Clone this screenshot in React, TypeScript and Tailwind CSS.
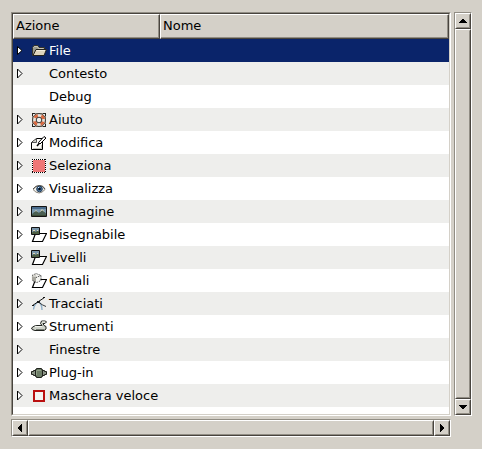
import type { ReactNode } from "react";

type Row = { label: string; icon?: ReactNode; expandable?: boolean };

function Icon({ children }: { children: ReactNode }) {
  return (
    <svg width="16" height="16" viewBox="0 0 16 16" aria-hidden="true" className="block">
      {children}
    </svg>
  );
}

const folder = (
  <Icon>
    <path d="M1.5 12.5V4.5l1.5-2h4l1 2h5.500V7" fill="#9b9a8e" stroke="#34332d" />
    <path d="M2.500 4.500 3.500 3.500h3l1 2H12.500" fill="none" stroke="#c9c6ba" />
    <path d="m2 12.500 3-6h10.500l-2.500 6Z" fill="#ddd4bd" stroke="#24231e" />
    <path d="M5.500 7.500h8.500" stroke="#f3eddd" />
  </Icon>
);

const lifebuoy = (
  <Icon>
    <path d="M3 1.500h10M14.500 3v10M13 14.500H3M1.500 13V3" stroke="#8a867c" />
    <path d="M1 1h3v1H2v2H1zM12 1h3v3h-1V2h-2zM14 12h1v3h-3v-1h2zM1 12h1v2h2v1H1z" fill="#24221f" />
    <circle cx="8" cy="8" r="6.500" fill="#e6e3db" stroke="#3a3732" />
    <circle cx="8" cy="8" r="4.700" fill="none" stroke="#d9683f" strokeWidth="3" strokeDasharray="3.700 3.682" strokeDashoffset="-1.850" />
    <circle cx="8" cy="8" r="2.800" fill="#efeeeb" stroke="#38342f" />
  </Icon>
);

const edit = (
  <Icon>
    <path d="M.5 7.500 5.500 3.500h6V14.500H.5Z" fill="#fbfbf8" stroke="#000" />
    <path d="M1 7.500h4.500V4" fill="#d0d0c8" stroke="#555" />
    <path d="M2 13.500h8.500V10" fill="none" stroke="#c4c4ba" />
    <path d="m7.500 7.500 5.500-6 2 1.500-6 6Z" fill="#fff" stroke="#000" />
    <path d="M6 11 8.500 8" stroke="#000" strokeWidth="1.500" />
  </Icon>
);

const selection = (
  <Icon>
    <path d="M1 1h14v14H1z" fill="#ef7777" />
    <path d="M1 1.5h14M1.5 1v14M1 14.5h14M14.5 1v14" stroke="#fff" />
    <path d="M1 1.5h14M1.5 1v14M1 14.5h14M14.5 1v14" stroke="#000" strokeDasharray="1 1" />
  </Icon>
);

const eye = (
  <Icon>
    <path d="M2 8.500Q5 4.500 8.500 4.500t5.500 4Q11 12 8 12T2 8.500Z" fill="#f5f3ec" stroke="#8b867d" />
    <path d="M2 8Q4.500 4.500 8.500 4.500T14 8" fill="none" stroke="#55514b" />
    <circle cx="8.500" cy="8" r="2.800" fill="#49739d" stroke="#203b59" />
    <circle cx="8.500" cy="8" r="1.300" fill="#050d17" />
    <path d="M7 6h1v1H7z" fill="#d9edff" />
  </Icon>
);

const picture = (
  <Icon>
    <path d="M.5 2.500h15v10H.5Z" fill="#7898b0" stroke="#141414" />
    <path d="M1 3h14v2H1Z" fill="#4a6c8c" />
    <path d="m1 10 4-3.500L8 9l3-3.500 4 4V12H1Z" fill="#4b6053" />
    <path d="m4 7.500 1-1 1 1M9.500 7.500 11 5.500l2 2" fill="none" stroke="#e8e2c6" />
    <path d="M1 11.500h14" stroke="#3c4c36" />
  </Icon>
);

const layers = (
  <Icon>
    <path d="M4.500 6.500h11L11.500 14.500H1.500Z" fill="#fff" stroke="#000" strokeWidth="1.200" />
    <path d="M.5.500h8v7h-8Z" fill="#7894a8" stroke="#111" />
    <path d="m1 5.500 2-1.500 2 1 1.500-2L8 4.500V7H1Z" fill="#4d5e43" />
    <path d="M2 3h2v1H2zM6 3h1v1H6z" fill="#e1d8b4" />
  </Icon>
);

const channels = (
  <Icon>
    <path d="M4.500 6.500h11L11.500 14.500H1.500Z" fill="#fff" stroke="#000" strokeWidth="1.200" />
    <path d="m.5 2.500 4-2 5 2v5l-4 2-5-2Z" fill="#f4f4f0" />
    <path d="m1 3 4 1v5L1 7Z" fill="#a7a69e" />
    <path d="m1 3 4-2v3Z" fill="#d0cfc8" />
    <path d="m1 2.500 4-2 5 2v5l-4 2M5 4.500l5-2" fill="none" stroke="#333" strokeDasharray="1 1" />
    <path d="M1.500 7.500 5.500 9.500" stroke="#555" />
  </Icon>
);

const path = (
  <Icon>
    <path d="M2.500 13.500Q3 8.500 7.500 5.500 11 8 11 14" fill="none" stroke="#8fb0ca" strokeWidth="1.400" />
    <path d="m1.500 9.500 12-8" stroke="#151515" />
    <path d="M1 9h2v1H1zM12 1h2v1h-2zM6 5h3v2H6z" fill="#151515" />
    <path d="M8 6.500Q11 9 15 10.500" fill="none" stroke="#35393c" />
  </Icon>
);

const tools = (
  <Icon>
    <path d="M.5 9Q3 6.500 6 6.500h5l-1.500-2 1-2.500h4l1 1-1.500 1.500h-2l1 2 2 1V10l-2 1.500H4Q.5 11 .5 9Z" fill="#cfd3ca" stroke="#222521" />
    <path d="M4 7.500h7M11 3h3" stroke="#f1f3ed" />
    <path d="M5 10.500h8" stroke="#7a7e76" />
  </Icon>
);

const plugin = (
  <Icon>
    <path d="M.5 6.500h2v-1h2v5h-2v-1h-2ZM11.500 5.500h2v1h2v3h-2v1h-2Z" fill="#8d9688" stroke="#20221d" />
    <path d="M4.500 4.500h1v-1h5v1h1v7h-1v1h-5v-1h-1Z" fill="#6c7d66" stroke="#20221d" />
    <path d="M5.500 10V5.500H10" fill="none" stroke="#91a087" />
  </Icon>
);

const quickMask = (
  <Icon>
    <path d="M3 3h10v10H3z" fill="#f4f4f2" stroke="#ba1010" strokeWidth="2" />
  </Icon>
);

const rows: Row[] = [
  { label: "File", icon: folder },
  { label: "Contesto" },
  { label: "Debug", expandable: false },
  { label: "Aiuto", icon: lifebuoy },
  { label: "Modifica", icon: edit },
  { label: "Seleziona", icon: selection },
  { label: "Visualizza", icon: eye },
  { label: "Immagine", icon: picture },
  { label: "Disegnabile", icon: layers },
  { label: "Livelli", icon: layers },
  { label: "Canali", icon: channels },
  { label: "Tracciati", icon: path },
  { label: "Strumenti", icon: tools },
  { label: "Finestre" },
  { label: "Plug-in", icon: plugin },
  { label: "Maschera veloce", icon: quickMask },
];

const raised =
  "border border-t-white border-l-white border-r-[#48443e] border-b-[#48443e] bg-[#d4d0c8]";

const bevel = "h-full w-full border border-t-[#d4d0c8] border-l-[#d4d0c8] border-r-[#918d84] border-b-[#918d84]";

function Arrow({ d }: { d: string }) {
  return (
    <svg width="8" height="8" viewBox="0 0 8 8" shapeRendering="crispEdges" aria-hidden="true">
      <path d={d} fill="#000" />
    </svg>
  );
}

function StepButton({ label, d }: { label: string; d: string }) {
  return (
    <button type="button" aria-label={label} className={`size-4 shrink-0 ${raised}`}>
      <span className={`flex items-center justify-center ${bevel}`}>
        <Arrow d={d} />
      </span>
    </button>
  );
}

function Scrollbar({ vertical = false }: { vertical?: boolean }) {
  return (
    <div
      role="scrollbar"
      aria-controls="actions"
      aria-valuenow={0}
      aria-orientation={vertical ? "vertical" : "horizontal"}
      className={`flex border border-t-[#918d84] border-l-[#918d84] border-r-white border-b-white bg-[#d4d0c8] ${vertical ? "w-[18px] flex-col" : "h-[18px]"}`}
    >
      <StepButton label={vertical ? "Su" : "Sinistra"} d={vertical ? "M3 2h2v1h1v1h1v1h1v1H0V5h1V4h1V3h1z" : "M2 3h1V2h1V1h1V0h1v8H5V7H4V6H3V5H2z"} />
      <div className={`flex-1 ${raised}`}>
        <div className={bevel} />
      </div>
      <StepButton label={vertical ? "Giù" : "Destra"} d={vertical ? "M0 2h8v1H7v1H6v1H5v1H3V5H2V4H1V3H0z" : "M2 0h1v1h1v1h1v1h1v2H5v1H4v1H3v1H2z"} />
    </div>
  );
}

function Expander({ label, selected }: { label: string; selected: boolean }) {
  return (
    <button type="button" aria-label={`Espandi ${label}`} className="block">
      <svg width="6" height="12" viewBox="0 0 6 12" className="block" aria-hidden="true">
        {selected ? (
          <path d="M.5 1.500v8L5 5.500Z" fill="#fff" stroke="#000" />
        ) : (
          <path d="M.5 1v9L5 5.500Z" fill="#fff" stroke="#000" />
        )}
      </svg>
    </button>
  );
}

export default function App() {
  return (
    <main className="grid grid-cols-[minmax(0,1fr)_18px] gap-[3px] bg-[#d4d0c8] py-3 pr-2.5 pl-[11px] font-['DejaVu_Sans',sans-serif] text-[13px] leading-4 text-black">
      <div className="border border-t-[#918d84] border-l-[#918d84] border-r-white border-b-white">
        <div className="border border-t-[#48443e] border-l-[#48443e] border-r-[#d4d0c8] border-b-[#d4d0c8] bg-white pb-[7px]">
          <table id="actions" className="w-full table-fixed border-separate border-spacing-0">
            <colgroup>
              <col className="w-[147px]" />
              <col />
            </colgroup>
            <thead>
              <tr>
                {["Azione", "Nome"].map((title) => (
                  <th key={title} scope="col" className={`h-[25px] p-0 text-left font-normal ${raised}`}>
                    <div className="flex h-[23px] items-center border-r border-b border-[#918d84] px-0.5">{title}</div>
                  </th>
                ))}
              </tr>
            </thead>
            <tbody>
              {rows.map(({ label, icon, expandable = true }, index) => (
                <tr
                  key={label}
                  aria-selected={index === 0}
                  className={index === 0 ? "bg-[#0a246a] text-white" : index % 2 ? "bg-[#eeeeec]" : "bg-white"}
                >
                  <td className="h-[23px] p-0">
                    <div className="flex h-[23px] items-center pl-1">
                      <span className="w-3.5 shrink-0">
                        {expandable && <Expander label={label} selected={index === 0} />}
                      </span>
                      <span className="mr-0.5 size-4 shrink-0">{icon}</span>
                      <span className="whitespace-nowrap">{label}</span>
                    </div>
                  </td>
                  <td className="p-0" />
                </tr>
              ))}
            </tbody>
          </table>
        </div>
      </div>
      <Scrollbar vertical />
      <Scrollbar />
    </main>
  );
}
